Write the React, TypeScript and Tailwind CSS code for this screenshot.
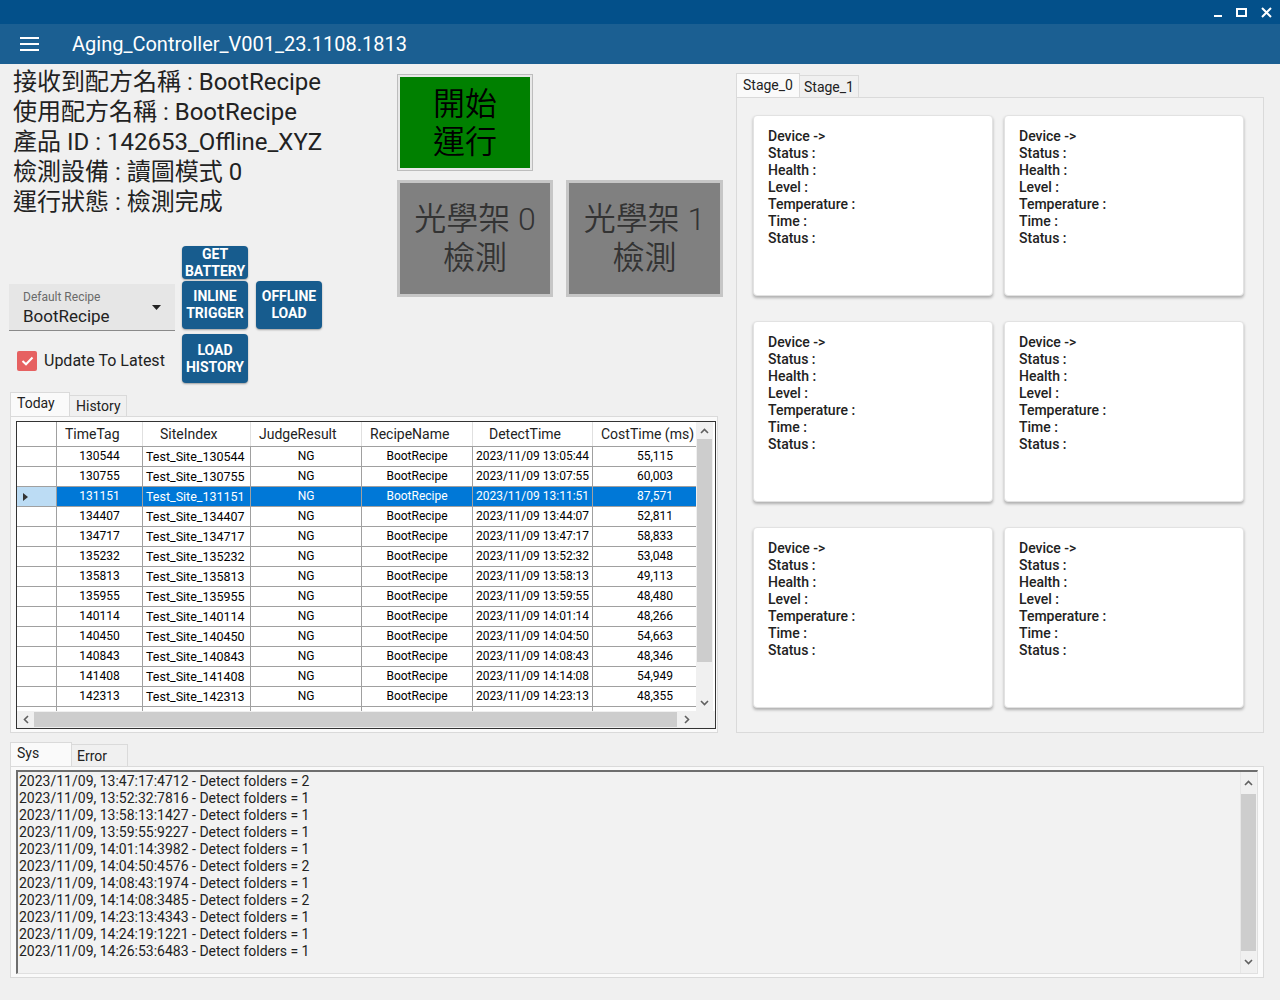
import React from "react";

const rows = [
  ["130544", "13:05:44", "55,115"],
  ["130755", "13:07:55", "60,003"],
  ["131151", "13:11:51", "87,571"],
  ["134407", "13:44:07", "52,811"],
  ["134717", "13:47:17", "58,833"],
  ["135232", "13:52:32", "53,048"],
  ["135813", "13:58:13", "49,113"],
  ["135955", "13:59:55", "48,480"],
  ["140114", "14:01:14", "48,266"],
  ["140450", "14:04:50", "54,663"],
  ["140843", "14:08:43", "48,346"],
  ["141408", "14:14:08", "54,949"],
  ["142313", "14:23:13", "48,355"],
];

const logs = [
  ["13:47:17:4712", "2"],
  ["13:52:32:7816", "1"],
  ["13:58:13:1427", "1"],
  ["13:59:55:9227", "1"],
  ["14:01:14:3982", "1"],
  ["14:04:50:4576", "2"],
  ["14:08:43:1974", "1"],
  ["14:14:08:3485", "2"],
  ["14:23:13:4343", "1"],
  ["14:24:19:1221", "1"],
  ["14:26:53:6483", "1"],
];

const font = { fontFamily: "Roboto, 'Noto Sans CJK TC', sans-serif" };
const cjk = { fontFamily: "Roboto, 'Noto Sans CJK TC', sans-serif" };

function BlueBtn({ lines, h }: { lines: string[]; h: string }) {
  return (
    <div
      className={`w-[66px] ${h} rounded-[4px] bg-[#175c8e] text-white text-[14px] font-bold leading-[17px] flex flex-col items-center justify-center shadow-[0_1px_2px_rgba(0,0,0,0.35)]`}
    >
      {lines.map((l) => (
        <span key={l}>{l}</span>
      ))}
    </div>
  );
}

function Card() {
  return (
    <div className="w-[240px] h-[181px] bg-white rounded-[4px] border border-[#e2e2e2] shadow-[0_2px_3px_rgba(0,0,0,0.28)] pl-[14px] pt-[12px] text-[14px] leading-[17px] font-medium text-[#222]">
      <div>Device -&gt;</div>
      <div>Status :</div>
      <div>Health :</div>
      <div>Level :</div>
      <div>Temperature :</div>
      <div>Time :</div>
      <div>Status :</div>
    </div>
  );
}

function UpArrow() {
  return (
    <svg width="9" height="6" viewBox="0 0 9 6">
      <path d="M1 5 L4.5 1.5 L8 5" fill="none" stroke="#606060" strokeWidth="1.6" />
    </svg>
  );
}
function DownArrow() {
  return (
    <svg width="9" height="6" viewBox="0 0 9 6">
      <path d="M1 1 L4.5 4.5 L8 1" fill="none" stroke="#606060" strokeWidth="1.6" />
    </svg>
  );
}
function LeftArrow() {
  return (
    <svg width="6" height="9" viewBox="0 0 6 9">
      <path d="M5 1 L1.5 4.5 L5 8" fill="none" stroke="#606060" strokeWidth="1.6" />
    </svg>
  );
}
function RightArrow() {
  return (
    <svg width="6" height="9" viewBox="0 0 6 9">
      <path d="M1 1 L4.5 4.5 L1 8" fill="none" stroke="#606060" strokeWidth="1.6" />
    </svg>
  );
}

const cols = "grid grid-cols-[40px_86px_108px_111px_111px_120px_103px]";

export default function App() {
  return (
    <div className="w-[1280px] h-[1000px] bg-[#f0f0f0] overflow-hidden text-[#222]" style={font}>
      {/* window title bar */}
      <div className="h-[24px] bg-[#03508a] flex items-center justify-end pr-[8px] gap-[14px]">
        <div className="w-[8px] h-[2px] bg-white mt-[8px]" />
        <div className="w-[11px] h-[9px] border-2 border-white" />
        <svg width="11" height="11" viewBox="0 0 11 11">
          <path d="M1 1 L10 10 M10 1 L1 10" stroke="white" strokeWidth="2" />
        </svg>
      </div>
      {/* app bar */}
      <div className="h-[40px] bg-[#1b5f92] flex items-center">
        <div className="ml-[20px] w-[19px] flex flex-col gap-[4px]">
          <div className="h-[2px] bg-white" />
          <div className="h-[2px] bg-white" />
          <div className="h-[2px] bg-white" />
        </div>
        <div className="ml-[33px] text-white text-[20px] font-normal">Aging_Controller_V001_23.1108.1813</div>
      </div>

      <div className="flex">
        {/* left column */}
        <div className="w-[736px] shrink-0 pl-[10px] pr-[18px]">
          <div className="flex h-[328px]">
            <div className="w-[387px] shrink-0">
              <div className="pt-[3px] pl-[3px] text-[24px] leading-[30px] text-[#222]" style={cjk}>
                <div className="whitespace-nowrap">接收到配方名稱 : BootRecipe</div>
                <div className="whitespace-nowrap">使用配方名稱 : BootRecipe</div>
                <div className="whitespace-nowrap">產品 ID : 142653_Offline_XYZ</div>
                <div className="whitespace-nowrap">檢測設備 : 讀圖模式 0</div>
                <div className="whitespace-nowrap">運行狀態 : 檢測完成</div>
              </div>
              <div className="mt-[29px] flex ml-[-1px]">
                <div className="w-[166px]">
                  <div className="mt-[38px] h-[47px] bg-[#e6e6e6] border-b border-[#8a8a8a] relative pl-[14px] pt-[6px]">
                    <div className="text-[12px] leading-[14px] text-[#6a6a6a]">Default Recipe</div>
                    <div className="text-[17px] leading-[22px] text-[#222] mt-[1px]">BootRecipe</div>
                    <svg className="absolute right-[14px] top-[21px]" width="9" height="5" viewBox="0 0 9 5">
                      <path d="M0 0 L9 0 L4.5 5 Z" fill="#222" />
                    </svg>
                  </div>
                  <div className="mt-[18px] flex items-center ml-[8px]">
                    <div className="w-[20px] h-[20px] rounded-[2px] bg-[#e66161] flex items-center justify-center">
                      <svg width="13" height="10" viewBox="0 0 13 10">
                        <path d="M1.5 5 L5 8.3 L11.5 1.5" fill="none" stroke="white" strokeWidth="2" />
                      </svg>
                    </div>
                    <span className="ml-[7px] text-[16px] text-[#222]">Update To Latest</span>
                  </div>
                </div>
                <div className="ml-[7px] flex flex-col">
                  <BlueBtn lines={["GET", "BATTERY"]} h="h-[33px]" />
                  <div className="mt-[2px]">
                    <BlueBtn lines={["INLINE", "TRIGGER"]} h="h-[48px]" />
                  </div>
                  <div className="mt-[5px]">
                    <BlueBtn lines={["LOAD", "HISTORY"]} h="h-[49px]" />
                  </div>
                </div>
                <div className="ml-[8px] mt-[35px]">
                  <BlueBtn lines={["OFFLINE", "LOAD"]} h="h-[48px]" />
                </div>
              </div>
            </div>
            <div className="pt-[10px] shrink-0">
              <div className="w-[136px] h-[97px] border border-[#bdbdbd] p-[2px] bg-[#e8e8e8]">
                <div className="w-full h-full bg-[#008000] flex flex-col items-center justify-center text-[32px] leading-[38px] font-[350] text-black" style={cjk}>
                  <span>開始</span>
                  <span>運行</span>
                </div>
              </div>
              <div className="mt-[9px] flex gap-[13px]">
                {["0", "1"].map((n, i) => (
                  <div key={n} className={`${i === 0 ? "w-[156px]" : "w-[157px]"} h-[117px] border-[3px] border-[#c6c6c6] bg-[#808080] flex flex-col items-center justify-center text-[32px] leading-[39px] font-[350] text-[#333]`} style={cjk}>
                    <span>光學架 {n}</span>
                    <span>檢測</span>
                  </div>
                ))}
              </div>
            </div>
          </div>

          {/* Today/History tabs */}
          <div className="flex items-end h-[24px]">
            <div className="h-[24px] w-[60px] bg-[#fafafa] border border-b-0 border-[#dadada] pl-[6px] text-[14px] leading-[20px]">Today</div>
            <div className="h-[21px] w-[57px] bg-[#f0f0f0] border border-b-0 border-l-0 border-[#dadada] pl-[6px] text-[14px] leading-[21px]">History</div>
          </div>
          <div className="h-[317px] border border-[#dadada] bg-[#fafafa] pt-[4px] pl-[5px] pr-[2px]">
            <div className="w-[700px] h-[308px] border border-[#333] bg-white flex flex-col">
              <div className="flex h-[289px]">
                <div className="w-[679px] overflow-hidden">
                  <div className={`${cols} h-[25px] text-[14px] leading-[24px] border-b border-[#a0a0a0]`}>
                    <div className="border-r border-[#a0a0a0]" />
                    <div className="border-r border-[#e0e0e0] pl-[8px]">TimeTag</div>
                    <div className="border-r border-[#e0e0e0] pl-[17px]">SiteIndex</div>
                    <div className="border-r border-[#e0e0e0] pl-[8px]">JudgeResult</div>
                    <div className="border-r border-[#e0e0e0] pl-[8px]">RecipeName</div>
                    <div className="border-r border-[#e0e0e0] pl-[16px]">DetectTime</div>
                    <div className="pl-[8px] whitespace-nowrap">CostTime (ms)</div>
                  </div>
                  {rows.map((r, i) => {
                    const sel = i === 2;
                    const bg = sel ? "bg-[#0078d7]" : "";
                    return (
                      <div
                        key={r[0]}
                        className={`${cols} h-[20px] text-[12px] leading-[19px] border-b border-[#a0a0a0] ${sel ? "text-white" : "text-black"}`}
                      >
                        <div className={`border-r border-[#a0a0a0] flex items-center pl-[6px] ${sel ? "bg-[#bcdcf4]" : "bg-white"}`}>
                          {sel && (
                            <svg width="5" height="8" viewBox="0 0 5 8">
                              <path d="M0 0 L5 4 L0 8 Z" fill="#333" />
                            </svg>
                          )}
                        </div>
                        <div className={`border-r border-[#a0a0a0] text-center ${bg}`}>{r[0]}</div>
                        <div className={`border-r border-[#a0a0a0] pl-[3px] whitespace-nowrap text-[12.5px] ${bg}`}>Test_Site_{r[0]}</div>
                        <div className={`border-r border-[#a0a0a0] text-center ${bg}`}>NG</div>
                        <div className={`border-r border-[#a0a0a0] text-center ${bg}`}>BootRecipe</div>
                        <div className={`border-r border-[#a0a0a0] text-center whitespace-nowrap ${bg}`}>2023/11/09 {r[1]}</div>
                        <div className={`text-center pl-[21px] ${bg}`}>{r[2]}</div>
                      </div>
                    );
                  })}
                  <div className={`${cols} h-[20px]`}>
                    <div className="border-r border-[#a0a0a0]" />
                    <div className="border-r border-[#a0a0a0]" />
                    <div className="border-r border-[#a0a0a0]" />
                    <div className="border-r border-[#a0a0a0]" />
                    <div className="border-r border-[#a0a0a0]" />
                    <div className="border-r border-[#a0a0a0]" />
                    <div />
                  </div>
                </div>
                <div className="w-[17px] bg-[#f0f0f0] flex flex-col">
                  <div className="h-[17px] flex items-center justify-center"><UpArrow /></div>
                  <div className="h-[223px] mx-[1px] bg-[#cdcdcd]" />
                  <div className="flex-1" />
                  <div className="h-[17px] flex items-center justify-center"><DownArrow /></div>
                </div>
              </div>
              <div className="h-[17px] flex bg-[#f0f0f0]">
                <div className="w-[17px] flex items-center justify-center"><LeftArrow /></div>
                <div className="w-[643px] my-[1px] bg-[#cdcdcd]" />
                <div className="w-[19px] flex items-center justify-center"><RightArrow /></div>
                <div className="flex-1 bg-[#f0f0f0]" />
              </div>
            </div>
          </div>
        </div>

        {/* right column */}
        <div className="w-[528px] shrink-0 pt-[9px]">
          <div className="flex items-end h-[24px]">
            <div className="h-[24px] w-[64px] bg-[#fafafa] border border-b-0 border-[#dadada] pl-[6px] text-[14px] leading-[22px]">Stage_0</div>
            <div className="h-[22px] w-[59px] bg-[#f0f0f0] border border-b-0 border-l-0 border-[#dadada] pl-[4px] text-[14px] leading-[22px]">Stage_1</div>
          </div>
          <div className="h-[636px] border border-[#dadada] bg-[#f2f2f2] pl-[16px] pt-[17px]">
            <div className="grid grid-cols-[240px_240px] gap-x-[11px] gap-y-[25px]">
              <Card />
              <Card />
              <Card />
              <Card />
              <Card />
              <Card />
            </div>
          </div>
        </div>
      </div>

      {/* bottom log */}
      <div className="mt-[9px] ml-[10px] w-[1254px]">
        <div className="flex items-end h-[24px]">
          <div className="h-[24px] w-[62px] bg-[#fafafa] border border-b-0 border-[#dadada] pl-[6px] text-[14px] leading-[20px]">Sys</div>
          <div className="h-[22px] w-[56px] bg-[#f0f0f0] border border-b-0 border-l-0 border-[#dadada] pl-[5px] text-[14px] leading-[22px]">Error</div>
        </div>
        <div className="h-[212px] border border-[#dadada] bg-[#fafafa] pt-[3px] px-[5px]">
          <div className="h-[204px] border-t-2 border-l-2 border-[#6e6e6e] border-b border-r border-b-[#e0e0e0] border-r-[#e0e0e0] bg-[#f2f2f2] flex">
            <div className="flex-1 pl-[1px] pt-[1px] text-[14px] leading-[17px] text-[#222]">
              {logs.map((l) => (
                <div key={l[0]}>2023/11/09, {l[0]} - Detect folders = {l[1]}</div>
              ))}
            </div>
            <div className="w-[16px] mr-[1px] bg-[#f0f0f0] flex flex-col border-l border-[#e6e6e6]">
              <div className="h-[22px] flex items-center justify-center"><UpArrow /></div>
              <div className="flex-1 bg-[#cdcdcd]" />
              <div className="h-[22px] flex items-center justify-center"><DownArrow /></div>
            </div>
          </div>
        </div>
      </div>
    </div>
  );
}
